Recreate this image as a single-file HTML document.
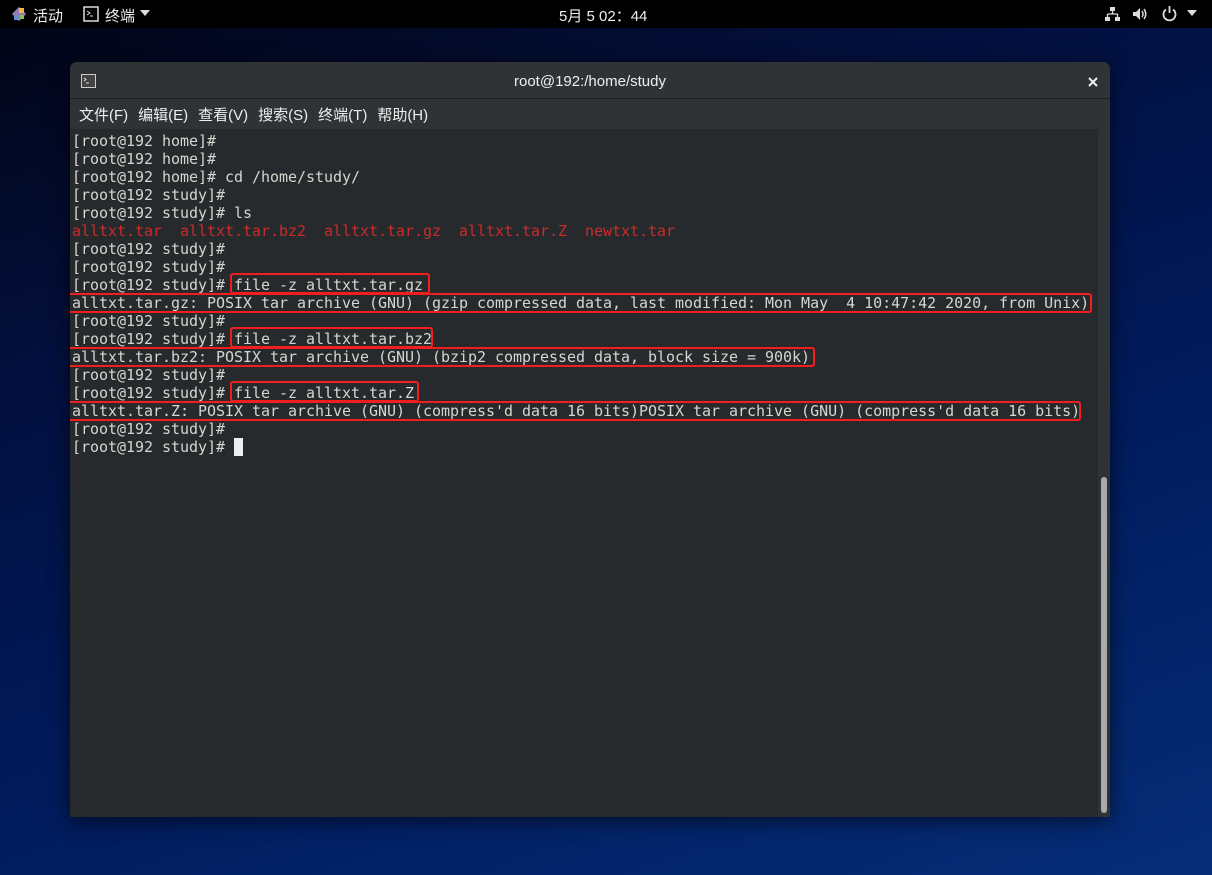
<!DOCTYPE html>
<html><head><meta charset="utf-8"><style>
*{margin:0;padding:0;box-sizing:border-box}
body{width:1212px;height:875px;overflow:hidden;position:relative;font-family:"Liberation Sans","Noto Sans CJK SC",sans-serif;
background:linear-gradient(160deg,#020414 0%,#03103f 30%,#001a5a 60%,#062d78 100%)}
.top{position:absolute;left:0;top:0;width:1212px;height:28px;background:#000;color:#eee;font-size:15px}
.win{position:absolute;left:70px;top:62px;width:1040px;height:755px;background:#262a2c;border-radius:7px 7px 0 0;box-shadow:0 4px 20px rgba(0,0,0,.6);overflow:hidden}
.tb{position:absolute;left:0;top:0;width:1040px;height:37px;background:#2f3335;border-bottom:1px solid #1b1d1e;color:#eee;font-size:15px;text-align:center;line-height:39px}
.mb{position:absolute;left:0;top:37px;width:1040px;height:30px;background:#2f3335;color:#eee;font-size:15px;line-height:34px}
.mb span{margin-left:9px;margin-right:1px}
.term{position:absolute;left:0;top:67px;width:1028px;height:688px;background:#262a2c}
pre{position:absolute;left:2px;top:3px;font-family:"DejaVu Sans Mono","Liberation Mono",monospace;font-size:15px;line-height:18px;color:#d3d7cf;letter-spacing:-0.03px}
.r{color:#cc2b2b}
.box{position:absolute;border:2px solid #f21d1d;border-radius:3px}
.sb{position:absolute;left:1028px;top:67px;width:12px;height:688px;background:#2f3335}
.th{position:absolute;left:3px;top:348px;width:6px;height:336px;background:#a9abab;border-radius:3px}
</style></head><body>
<div class="top">
<svg style="position:absolute;left:11px;top:6px" width="16" height="16" viewBox="0 0 16 16"><rect x="3" y="3" width="10" height="10" transform="rotate(45 8 8)" fill="#9a7bb0"/><rect x="8" y="2" width="5" height="5" fill="#e9b94a"/><rect x="3" y="9" width="5" height="5" fill="#6a8bd0"/><rect x="9" y="9" width="4" height="4" fill="#8bc34a"/></svg>
<span style="position:absolute;left:33px;top:5px">活动</span>
<svg style="position:absolute;left:83px;top:6px" width="16" height="16"><rect x="1" y="1" width="14" height="14" fill="none" stroke="#ddd" stroke-width="1.5"/><path d="M4 5l3 2-3 2M7 10h3" stroke="#ddd" fill="none"/></svg>
<span style="position:absolute;left:105px;top:5px">终端</span>
<svg style="position:absolute;left:140px;top:10px" width="10" height="6"><path d="M0 0h10L5 6z" fill="#ddd"/></svg>
<span style="position:absolute;left:559px;top:5px">5月 5  02：44</span>
<svg style="position:absolute;left:1104px;top:6px" width="16" height="16"><rect x="6" y="1" width="5" height="4" fill="#ddd"/><rect x="1" y="11" width="5" height="4" fill="#ddd"/><rect x="11" y="11" width="5" height="4" fill="#ddd"/><path d="M8.5 5v3M3.5 8h10M3.5 8v3M13.5 8v3" stroke="#ddd" stroke-width="1.3" fill="none"/></svg>
<svg style="position:absolute;left:1132px;top:6px" width="16" height="16"><path d="M1 6h3l4-4v12l-4-4H1z" fill="#ddd"/><path d="M10 5q2 3 0 6M12 3q3.5 5 0 10" stroke="#ddd" stroke-width="1.5" fill="none"/></svg>
<svg style="position:absolute;left:1161px;top:5px" width="17" height="17"><path d="M5 4.5A6 6 0 1 0 12 4.5" stroke="#ddd" stroke-width="1.8" fill="none"/><path d="M8.5 1v7" stroke="#ddd" stroke-width="1.8"/></svg>
<svg style="position:absolute;left:1187px;top:10px" width="10" height="6"><path d="M0 0h10L5 6z" fill="#ddd"/></svg>
</div>
<div class="win">
<div class="tb">root@192:/home/study
<svg style="position:absolute;left:11px;top:12px" width="15" height="14"><rect x="0.5" y="0.5" width="14" height="13" fill="#444" stroke="#ccc"/><path d="M3 4l2 1.5-2 1.5M5 9h3" stroke="#ddd" fill="none"/></svg>
<svg style="position:absolute;left:1018px;top:15px" width="10" height="10"><path d="M1 1l8 8M9 1l-8 8" stroke="#eee" stroke-width="2"/></svg>
</div>
<div class="mb"><span>文件(F)</span><span>编辑(E)</span><span>查看(V)</span><span>搜索(S)</span><span>终端(T)</span><span>帮助(H)</span></div>
<div class="term"><pre>[root@192 home]#
[root@192 home]#
[root@192 home]# cd /home/study/
[root@192 study]#
[root@192 study]# ls
<span class="r">alltxt.tar  alltxt.tar.bz2  alltxt.tar.gz  alltxt.tar.Z  newtxt.tar</span>
[root@192 study]#
[root@192 study]#
[root@192 study]# file -z alltxt.tar.gz
alltxt.tar.gz: POSIX tar archive (GNU) (gzip compressed data, last modified: Mon May  4 10:47:42 2020, from Unix)
[root@192 study]#
[root@192 study]# file -z alltxt.tar.bz2
alltxt.tar.bz2: POSIX tar archive (GNU) (bzip2 compressed data, block size = 900k)
[root@192 study]#
[root@192 study]# file -z alltxt.tar.Z
alltxt.tar.Z: POSIX tar archive (GNU) (compress'd data 16 bits)POSIX tar archive (GNU) (compress'd data 16 bits)
[root@192 study]#
[root@192 study]# <span style="background:#eee">&nbsp;</span></pre>
<div class="box" style="left:160px;top:144px;width:200px;height:21px"></div>
<div class="box" style="left:-3px;top:164px;width:1025px;height:20px"></div>
<div class="box" style="left:160px;top:198px;width:203px;height:21px"></div>
<div class="box" style="left:-3px;top:218px;width:748px;height:20px"></div>
<div class="box" style="left:160px;top:252px;width:189px;height:21px"></div>
<div class="box" style="left:-3px;top:272px;width:1014px;height:20px"></div>
</div>
<div class="sb"><div class="th"></div></div>
</div>
</body></html>
